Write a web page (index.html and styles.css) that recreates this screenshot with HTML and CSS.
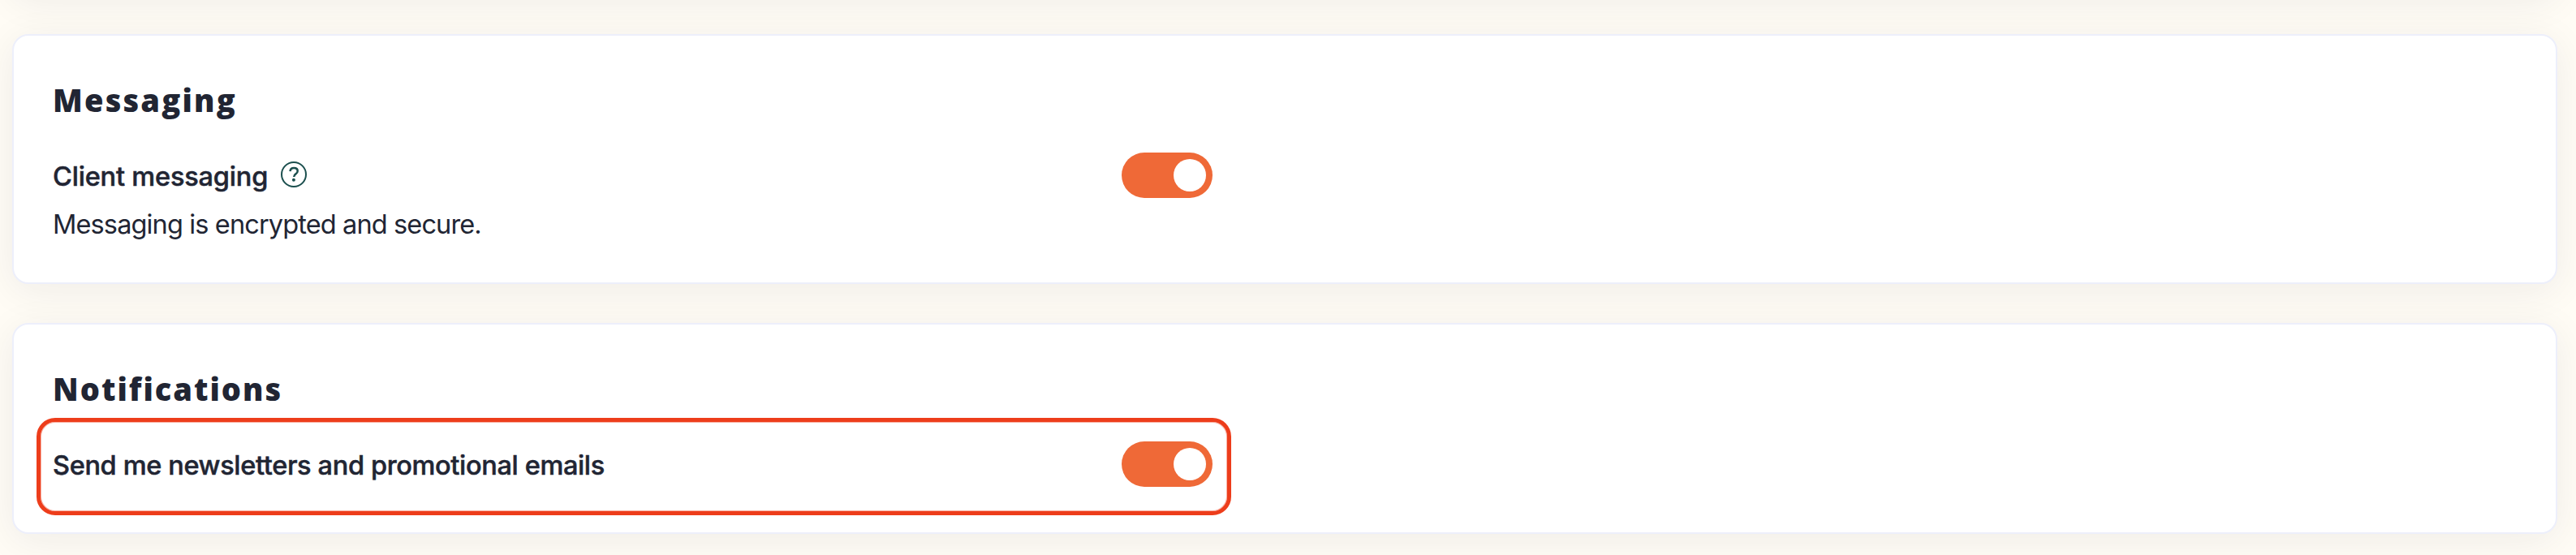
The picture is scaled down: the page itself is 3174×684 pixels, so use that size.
FILE: index.html
```html
<!DOCTYPE html>
<html lang="en">
<head>
<meta charset="utf-8">
<title>Settings</title>
<link rel="stylesheet" href="styles.css">
</head>
<body>
<main class="page">
  <section class="card card-previous"></section>
  <section class="card card-messaging">
    <h2 class="title title-messaging">Messaging</h2>
    <div class="row">
      <span class="label label-client">Client messaging</span>
      <svg class="help" viewBox="0 0 32 32" fill="none" stroke="#1b4f4e">
        <circle cx="16" cy="16" r="15" stroke-width="2"/>
        <path d="M11.5 12.1c.2-2.600 2-4.200 4.700-4.200 2.600 0 4.500 1.500 4.500 3.800 0 1.800-.9 2.800-2.300 3.700-1.500 1-2.200 1.800-2.200 3.700" stroke-width="2.500"/>
        <circle cx="15.900" cy="22.800" r="2" fill="#1b4f4e" stroke="none"/>
      </svg>
      <button class="toggle" role="switch" aria-checked="true" aria-label="Client messaging"><span class="knob"></span></button>
    </div>
    <p class="note">Messaging is encrypted and secure.</p>
  </section>
  <section class="card card-notifications">
    <h2 class="title title-notifications">Notifications</h2>
    <div class="row row-highlight">
      <span class="label label-news">Send me newsletters and promotional emails</span>
      <button class="toggle" role="switch" aria-checked="true" aria-label="Newsletters"><span class="knob"></span></button>
    </div>
  </section>
</main>
</body>
</html>
```
FILE: styles.css
```css
* { box-sizing: border-box; }
body {
  margin: 0;
  height: 684px;
  overflow: hidden;
  background: #fffcf5;
  color: #212533;
  font-family: Inter, "Liberation Sans", sans-serif;
}
.page {
  display: flex;
  flex-direction: column;
  gap: 48px;
  padding: 0 23px 0 15px;
  margin-top: -206px;
}
.card {
  flex: none;
  padding: 55px 48px 0;
  background: #fff;
  border: 2px solid #edeffb;
  border-radius: 20px;
  box-shadow: 0 8px 48px rgba(33, 30, 51, 0.07);
}
.card-previous { height: 200px; }
.card-messaging { height: 308px; }
.card-notifications { height: 260px; }
.title {
  margin: 0 0 41px;
  font: 800 38px/48px "Open Sans", sans-serif;
  white-space: nowrap;
}
.title-messaging { letter-spacing: 2.2px; }
.title-notifications { letter-spacing: 2px; }
.row {
  position: relative;
  display: flex;
  align-items: center;
  width: 1429px;
  height: 56px;
}
.row-highlight::after {
  content: "";
  position: absolute;
  inset: -29px -23px -35px -20px;
  border: 5px solid #ed3d1b;
  border-radius: 23px;
  box-shadow: inset 0 0 0 1px rgba(237, 61, 27, 0.4);
  pointer-events: none;
}
.label {
  padding-top: 4px;
  font-size: 32.5px;
  line-height: 40px;
  font-weight: 500;
  -webkit-text-stroke: 0.5px currentColor;
  white-space: nowrap;
}
.label-client { width: 281px; letter-spacing: -0.18px; }
.label-news { letter-spacing: -0.35px; }
.help {
  width: 32px;
  height: 32px;
  margin-top: -2px;
}
.toggle {
  display: flex;
  justify-content: flex-end;
  width: 112px;
  height: 56px;
  margin-left: auto;
  padding: 8px;
  border: 0;
  border-radius: 28px;
  background: #ef6937;
}
.knob {
  width: 40px;
  height: 40px;
  border-radius: 50%;
  background: #fff;
}
.note {
  margin: 13px 0 0;
  font-size: 32.5px;
  line-height: 40px;
  letter-spacing: -0.87px;
  white-space: nowrap;
}
```
